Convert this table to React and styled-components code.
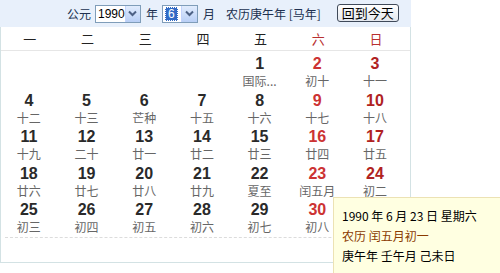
import React from "react";
import styled, { createGlobalStyle } from "styled-components";

const Global = createGlobalStyle`
  html, body { margin: 0; padding: 0; background: #fff; }
  body { font-family: "Liberation Sans", "Noto Sans CJK SC", sans-serif; }
`;

const Page = styled.div`
  position: relative;
  width: 500px;
  height: 273px;
  overflow: hidden;
`;

const Panel = styled.div`
  width: 411px;
  height: 263px;
  border: 1px solid #d3e2e4;
  border-top: none;
  box-sizing: border-box;
  display: flex;
  flex-direction: column;
`;

const Header = styled.div`
  height: 27px;
  background: #e8f0fb;
  display: flex;
  align-items: center;
  padding-left: 67px;
  font-size: 12px;
  color: #203050;
  font-family: "Noto Sans CJK SC", sans-serif;
  margin: 0 -1px;
`;

const Label = styled.span`
  margin: 0 ${(p) => p.$mr || 4}px 0 ${(p) => p.$ml || 0}px;
  line-height: 16px;
`;

const Select = styled.div`
  display: flex;
  align-items: stretch;
  width: ${(p) => p.$w}px;
  height: 18px;
  border: 1px solid #7f9db9;
  background: #fff;
  box-sizing: border-box;
  margin-right: 5px;
`;

const SelectValue = styled.div`
  flex: 1;
  display: flex;
  align-items: center;
  padding-left: 2px;
  font-family: "Liberation Sans", sans-serif;
  font-size: 12px;
  color: #000;
`;

const Highlight = styled.span`
  background: #316ac5;
  color: #fff;
  padding: 0 3px;
  line-height: 14px;
  outline: 1px dotted #fff;
  outline-offset: -1px;
`;

const ArrowBtn = styled.div`
  width: 15px;
  background: linear-gradient(#e1ecfd, #b9cff6);
  border-left: 1px solid #c3d3fd;
  display: flex;
  align-items: center;
  justify-content: center;
`;

const TodayBtn = styled.div`
  margin-left: 12px;
  width: 62px;
  height: 18px;
  box-sizing: border-box;
  border: 1px solid #404a5a;
  border-radius: 3px;
  background: linear-gradient(#ffffff, #e4e8ee);
  display: flex;
  align-items: center;
  justify-content: center;
  font-size: 13px;
  color: #000;
  margin-top: -2px;
`;

const WeekRow = styled.div`
  display: grid;
  grid-template-columns: repeat(7, 57.7px);
  height: 23px;
  align-items: center;
  border-bottom: 1px solid #e6e6e6;
  font-family: "Noto Sans CJK SC", sans-serif;
  font-size: 13px;
`;

const WeekCell = styled.div`
  text-align: center;
  color: ${(p) => (p.$red ? "#b83030" : "#222")};
`;

const Grid = styled.div`
  display: grid;
  grid-template-columns: repeat(7, 57.7px);
  grid-auto-rows: 36.5px;
  padding-top: 3px;
  margin-left: -1px;
`;

const Divider = styled.div`
  margin: 0 4px 0 4px;
  border-top: 1px dashed #dcdcdc;
`;

const Cell = styled.div`
  text-align: center;
  display: flex;
  flex-direction: column;
  align-items: center;
`;

const Num = styled.div`
  font-family: "Liberation Sans", sans-serif;
  font-weight: bold;
  font-size: 16px;
  line-height: 19px;
  color: ${(p) => (p.$c === "sat" ? "#cc3333" : p.$c === "sun" ? "#b02222" : "#2a2a2a")};
`;

const Lunar = styled.div`
  font-family: "Noto Sans CJK SC", sans-serif;
  font-size: 12px;
  line-height: 16px;
  color: #666;
`;

const Tooltip = styled.div`
  position: absolute;
  left: 333px;
  top: 197px;
  width: 175px;
  height: 85px;
  background: #ffffe1;
  border: 1px solid #ece2b4;
  box-sizing: border-box;
  padding: 8px 0 0 8px;
  font-family: "Noto Sans CJK SC", sans-serif;
  font-size: 12px;
`;

const TipLine = styled.div`
  line-height: 20px;
  color: ${(p) => p.$c || "#000"};
  white-space: nowrap;
`;

const Chevron = () => (
  <svg width="9" height="7" viewBox="0 0 9 7">
    <path d="M1 1.5 L4.5 5 L8 1.5" fill="none" stroke="#4d6185" strokeWidth="2" />
  </svg>
);

const days = [
  null, null, null, null,
  ["1", "国际..."], ["2", "初十"], ["3", "十一"],
  ["4", "十二"], ["5", "十三"], ["6", "芒种"], ["7", "十五"], ["8", "十六"], ["9", "十七"], ["10", "十八"],
  ["11", "十九"], ["12", "二十"], ["13", "廿一"], ["14", "廿二"], ["15", "廿三"], ["16", "廿四"], ["17", "廿五"],
  ["18", "廿六"], ["19", "廿七"], ["20", "廿八"], ["21", "廿九"], ["22", "夏至"], ["23", "闰五月"], ["24", "初二"],
  ["25", "初三"], ["26", "初四"], ["27", "初五"], ["28", "初六"], ["29", "初七"], ["30", "初八"], null,
];

const weeks = ["一", "二", "三", "四", "五", "六", "日"];

export default function App() {
  return (
    <Page>
      <Global />
      <Panel>
        <Header>
          <Label>公元</Label>
          <Select $w={46}>
            <SelectValue>1990</SelectValue>
            <ArrowBtn><Chevron /></ArrowBtn>
          </Select>
          <Label>年</Label>
          <Select $w={36}>
            <SelectValue><Highlight>6</Highlight></SelectValue>
            <ArrowBtn><Chevron /></ArrowBtn>
          </Select>
          <Label $mr={11}>月</Label>
          <Label>农历庚午年 [马年]</Label>
          <TodayBtn>回到今天</TodayBtn>
        </Header>
        <WeekRow>
          {weeks.map((w, i) => (
            <WeekCell key={w} $red={i >= 5}>{w}</WeekCell>
          ))}
        </WeekRow>
        <Grid>
          {days.map((d, i) => {
            const col = i % 7;
            const c = col === 5 ? "sat" : col === 6 ? "sun" : "";
            return (
              <Cell key={i}>
                {d && (
                  <>
                    <Num $c={c}>{d[0]}</Num>
                    <Lunar>{d[1]}</Lunar>
                  </>
                )}
              </Cell>
            );
          })}
        </Grid>
        <Divider />
      </Panel>
      <Tooltip>
        <TipLine>1990 年 6 月 23 日 星期六</TipLine>
        <TipLine $c="#8a3a00">农历 闰五月初一</TipLine>
        <TipLine>庚午年 壬午月 己未日</TipLine>
      </Tooltip>
    </Page>
  );
}
